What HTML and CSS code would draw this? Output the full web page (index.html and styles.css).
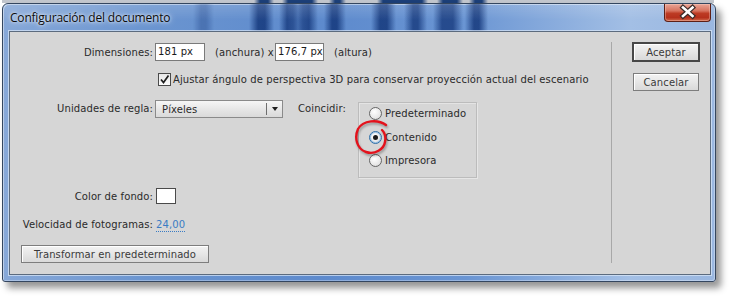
FILE: index.html
```html
<!DOCTYPE html>
<html lang="es">
<head>
<meta charset="utf-8">
<title>Configuración del documento</title>
<link rel="stylesheet" href="styles.css">
</head>
<body>
<div class="backdrop"></div>
<div class="window">
  <div class="titlebar">
    <span class="title">Configuración del documento</span>
    <div class="close">
      <svg width="47" height="18" viewBox="0 0 47 18">
        <path d="M19 4.5 L28.5 13 M28.5 4.5 L19 13" stroke="#3a2a28" stroke-width="5" stroke-linecap="square"/>
        <path d="M19 4.5 L28.5 13 M28.5 4.5 L19 13" stroke="#ffffff" stroke-width="2.6" stroke-linecap="square"/>
      </svg>
    </div>
  </div>
  <div class="client">
    <div class="main">
      <div class="row r-dim">
        <span class="lbl">Dimensiones:</span>
        <span class="field f1">181 px</span>
        <span class="txt t-anch">(anchura) x</span>
        <span class="field f2">176,7 px</span>
        <span class="txt t-alt">(altura)</span>
      </div>
      <div class="row r-check">
        <span class="checkbox">
          <svg width="11" height="11" viewBox="0 0 11 11"><path d="M2 5.5 L4.5 8.5 L9.5 1.5" fill="none" stroke="#1e1e1e" stroke-width="1.7"/></svg>
        </span>
        <span class="checktext">Ajustar ángulo de perspectiva 3D para conservar proyección actual del escenario</span>
      </div>
      <div class="row r-units">
        <span class="lbl lh18">Unidades de regla:</span>
        <div class="select">
          <span class="sel-val">Píxeles</span>
          <span class="sel-div"></span>
          <span class="sel-arrow"></span>
        </div>
        <span class="coin">Coincidir:</span>
        <div class="group">
          <div class="radios">
            <div class="radio-row"><span class="radio"></span><span>Predeterminado</span></div>
            <div class="radio-row"><span class="radio on"><span class="dot"></span></span><span>Contenido</span></div>
            <div class="radio-row"><span class="radio"></span><span>Impresora</span></div>
          </div>
          <svg class="mark" width="40" height="40" viewBox="0 0 40 40">
            <path d="M32 7 C24 1, 9 2, 4 11 C0 20, 3 31, 12 34 C21 37, 30 31, 31 24 C32 19, 31 15, 28 12" fill="none" stroke="#e3121c" stroke-width="2.4" stroke-linecap="round"/>
          </svg>
        </div>
      </div>
      <div class="row r-color">
        <span class="lbl">Color de fondo:</span>
        <span class="swatch"></span>
      </div>
      <div class="row r-fps">
        <span class="lbl">Velocidad de fotogramas:</span>
        <span class="fps">24,00</span>
      </div>
      <div class="row r-reset">
        <div class="btn reset">Transformar en predeterminado</div>
      </div>
    </div>
    <div class="sep"></div>
    <div class="side">
      <div class="btn ok">Aceptar</div>
      <div class="btn cancel">Cancelar</div>
    </div>
  </div>
</div>
</body>
</html>
```

FILE: styles.css
```css
html, body {
  margin: 0;
  padding: 0;
  background: #ffffff;
}
body {
  font-family: "DejaVu Sans", sans-serif;
  font-size: 10px;
  letter-spacing: 0.1px;
  color: #2a2a2a;
  width: 733px;
  height: 297px;
  overflow: hidden;
}

.backdrop {
  height: 3px;
  width: 712px;
  margin-left: 2px;
  background:
    linear-gradient(90deg, transparent 252px, #1c3f78 258px, #1c3f78 266px, transparent 272px,
      transparent 280px, #1c3f78 286px, #1c3f78 310px, transparent 316px,
      transparent 327px, #1c3f78 333px, #1c3f78 338px, transparent 344px,
      transparent 375px, #1c3f78 381px, #1c3f78 420px, transparent 426px,
      transparent 435px, #1c3f78 441px, #1c3f78 455px, transparent 461px,
      transparent 467px, #1c3f78 473px, #1c3f78 480px, transparent 486px),
    #c2c6cd;
}

.window {
  margin-left: 2px;
  width: 714px;
  height: 279px;
  box-sizing: border-box;
  border: 1px solid #34465f;
  border-radius: 6px 6px 3px 3px;
  background: linear-gradient(90deg, #87a8d8 0%, #6b95d0 20%, #5d8acd 45%, #6a95d3 65%, #a3bfe5 88%, #9ab7e0 100%);
  box-shadow: 5px 6px 7px rgba(0, 0, 0, 0.42), inset 1px 1px 0 rgba(255, 255, 255, 0.45), inset -1px -1px 0 rgba(255, 255, 255, 0.3);
  display: flex;
  flex-direction: column;
}

.titlebar {
  height: 27px;
  display: flex;
  align-items: center;
  padding: 0 4px 0 7px;
  border-radius: 5px 5px 0 0;
  background:
    linear-gradient(180deg, rgba(255, 255, 255, 0.16) 0%, rgba(255, 255, 255, 0) 60%),
    linear-gradient(90deg,
      transparent 190px, rgba(12, 46, 115, 0.3) 198px, rgba(12, 46, 115, 0.3) 203px, transparent 211px,
      transparent 246px, rgba(10, 44, 112, 0.75) 255px, rgba(10, 44, 112, 0.75) 262px, transparent 271px,
      transparent 276px, rgba(10, 44, 112, 0.7) 284px, rgba(10, 44, 112, 0.6) 290px, rgba(10, 44, 112, 0.35) 295px, rgba(10, 44, 112, 0.6) 300px, rgba(10, 44, 112, 0.7) 306px, transparent 315px,
      transparent 321px, rgba(10, 44, 112, 0.75) 329px, rgba(10, 44, 112, 0.75) 334px, transparent 343px,
      transparent 368px, rgba(10, 44, 112, 0.75) 377px, rgba(10, 44, 112, 0.75) 384px, transparent 393px,
      transparent 401px, rgba(10, 44, 112, 0.7) 410px, rgba(10, 44, 112, 0.7) 415px, transparent 424px,
      transparent 430px, rgba(10, 44, 112, 0.7) 439px, rgba(10, 44, 112, 0.7) 450px, transparent 460px,
      transparent 462px, rgba(10, 44, 112, 0.75) 471px, rgba(10, 44, 112, 0.75) 476px, transparent 485px);
}

.title {
  font-family: "Open Sans", "DejaVu Sans", sans-serif;
  font-size: 12px;
  letter-spacing: -0.2px;
  color: #0c0c0c;
  text-shadow: 0 0 6px rgba(255, 255, 255, 0.9), 0 0 3px rgba(255, 255, 255, 0.8);
}

.close {
  margin-left: auto;
  align-self: flex-start;
  width: 47px;
  height: 18px;
  box-sizing: border-box;
  border: 1px solid #5d1f16;
  border-top: none;
  border-radius: 0 0 4px 4px;
  background: linear-gradient(180deg, #e9a597 0%, #d7735f 40%, #bd3b24 55%, #b5301c 80%, #cf6a4c 100%);
  box-shadow: inset 0 0 0 1px rgba(255, 220, 210, 0.35);
}
.close svg {
  display: block;
  margin: -1px 0 0 -1px;
}

.client {
  margin: 0 4px 6px 6px;
  height: 244px;
  box-sizing: border-box;
  border: 1px solid #5c6b7e;
  background: #d6d6d6;
  display: flex;
  box-shadow: 0 0 0 1px rgba(220, 232, 248, 0.7);
}

.main {
  width: 601px;
  padding-top: 11px;
  box-sizing: border-box;
}

.row {
  display: flex;
  align-items: center;
}

.lbl {
  width: 143px;
  text-align: right;
  flex: none;
}
.lh18 {
  line-height: 18px;
}

.r-dim {
  height: 18px;
}
.field {
  height: 18px;
  box-sizing: border-box;
  border: 1px solid #7a7a7a;
  background: #ffffff;
  line-height: 16px;
  padding-left: 2px;
  color: #1a1a1a;
}
.f1 {
  width: 50px;
  margin-left: 2px;
}
.t-anch {
  margin-left: 10px;
  width: 60px;
}
.f2 {
  width: 49px;
}
.t-alt {
  margin-left: 10px;
}

.r-check {
  margin-top: 12px;
  height: 13px;
}
.checkbox {
  margin-left: 148px;
  width: 13px;
  height: 13px;
  box-sizing: border-box;
  border: 1px solid #4a4a4a;
  background: linear-gradient(180deg, #e8e8e8, #fbfbfb);
  display: flex;
  align-items: center;
  justify-content: center;
}
.checkbox svg {
  display: block;
}
.checktext {
  margin-left: 2px;
}

.r-units {
  margin-top: 14px;
  align-items: flex-start;
  height: 77px;
}
.select {
  margin-left: 2px;
  width: 128px;
  height: 18px;
  box-sizing: border-box;
  border: 1px solid #8a8a8a;
  background: linear-gradient(180deg, #f6f6f6 0%, #e4e4e4 60%, #dadada 100%);
  display: flex;
  align-items: center;
}
.sel-val {
  padding-left: 6px;
  width: 104px;
  color: #2a2a2a;
}
.sel-div {
  width: 1px;
  height: 12px;
  background: #6e6e6e;
}
.sel-arrow {
  margin-left: 5px;
  width: 0;
  height: 0;
  border-left: 3.5px solid transparent;
  border-right: 3.5px solid transparent;
  border-top: 4px solid #1e1e1e;
}
.coin {
  margin-left: 15px;
  width: 60px;
  line-height: 18px;
}
.group {
  position: relative;
  margin-top: 2px;
  width: 119px;
  height: 76px;
  box-sizing: border-box;
  border: 1px solid #bcbcbc;
  box-shadow: inset 1px 1px 0 #e4e4e4, 1px 1px 0 #e6e6e6;
  padding-left: 10px;
}
.radios {
  margin-top: -2px;
}
.radio-row {
  height: 24px;
  display: flex;
  align-items: center;
}
.radio-row:last-child {
  height: 23px;
}
.radio {
  width: 13px;
  height: 13px;
  box-sizing: border-box;
  border-radius: 50%;
  border: 1px solid #666666;
  background: radial-gradient(circle at 40% 35%, #ffffff 0%, #e8e8e8 60%, #cfcfcf 100%);
  margin-right: 3px;
  display: flex;
  align-items: center;
  justify-content: center;
}
.radio.on {
  border-color: #2f6fa8;
  box-shadow: inset 0 0 0 1px #9ec4e6;
}
.dot {
  width: 5px;
  height: 5px;
  border-radius: 50%;
  background: #1a1a1a;
}
.mark {
  position: absolute;
  left: -5px;
  top: 15px;
  filter: drop-shadow(1px 2px 1px rgba(0, 0, 0, 0.3));
}

.r-color {
  margin-top: 11px;
  height: 16px;
}
.swatch {
  margin-left: 3px;
  width: 20px;
  height: 16px;
  box-sizing: border-box;
  border: 1px solid #4a4a4a;
  background: #ffffff;
}

.r-fps {
  margin-top: 13px;
  height: 14px;
}
.fps {
  margin-left: 3px;
  color: #3a7cc4;
  border-bottom: 1px dotted #3a7cc4;
  line-height: 12px;
  margin-top: 2px;
}

.r-reset {
  margin-top: 14px;
  height: 18px;
}

.btn {
  box-sizing: border-box;
  display: flex;
  align-items: center;
  justify-content: center;
  color: #3a3a3a;
  background: linear-gradient(180deg, #f3f3f3 0%, #e6e6e6 50%, #d9d9d9 100%);
  border: 1px solid #7d7d7d;
  box-shadow: inset 1px 1px 0 #ffffff;
}
.reset {
  margin-left: 11px;
  width: 188px;
  height: 18px;
}

.sep {
  width: 1px;
  margin-top: 10px;
  height: 221px;
  background: #a8a8a8;
}

.side {
  padding: 10px 0 0 20px;
}
.ok {
  width: 68px;
  height: 20px;
  border: 2px solid #474747;
}
.cancel {
  margin-top: 11px;
  margin-left: 1px;
  width: 66px;
  height: 18px;
}
```
